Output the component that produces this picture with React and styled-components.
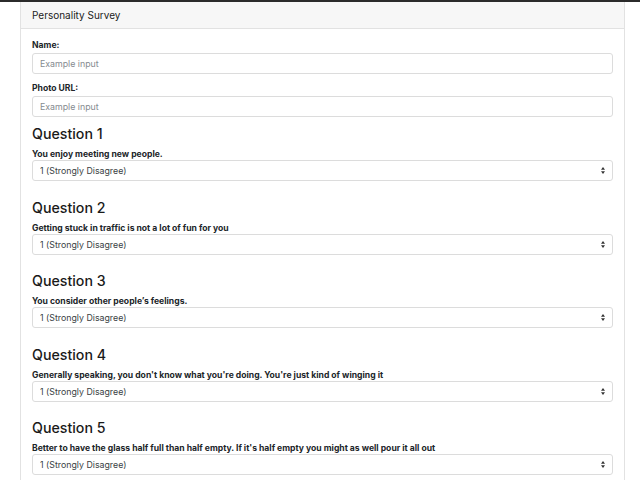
import React from "react";
import styled, { createGlobalStyle } from "styled-components";

const Global = createGlobalStyle`
  html, body { margin: 0; padding: 0; background: #fff; }
  body {
    font-family: Inter, "Liberation Sans", Arial, sans-serif;
    color: #212529;
    border-top: 2px solid #2b2b2b;
  }
  * { box-sizing: border-box; }
`;

const Page = styled.div`
  padding: 0 15px 0 20px;
`;

const Card = styled.section`
  border: 1px solid #e2e2e2;
  border-top: none;
  background: #fff;
`;

const CardHeader = styled.header`
  height: 27px;
  display: flex;
  align-items: center;
  padding: 0 11px;
  background: #f7f7f7;
  border-bottom: 1px solid #e2e2e2;
  font-size: 10px;
  color: #222;
`;

const CardBody = styled.div`
  padding: 10px 11px 0;
`;

const Group = styled.div`
  margin-bottom: ${(p) => p.$mb || 8}px;
`;

const Label = styled.label`
  display: block;
  font-size: 8.6px;
  font-weight: 700;
  line-height: 12px;
  margin-bottom: ${(p) => (p.$tight ? 0 : 2)}px;
  color: #212529;
`;

const Input = styled.input`
  display: block;
  width: 100%;
  height: 21px;
  padding: 0 7px;
  border: 1px solid #dcdcdc;
  border-radius: 3px;
  font-family: inherit;
  font-size: 8.8px;
  color: #495057;
  outline: none;
  &::placeholder { color: #868b90; }
`;

const Heading = styled.h4`
  margin: 0 0 6px;
  font-size: 14.2px;
  font-weight: 500;
  line-height: 17px;
  color: #1a1a1a;
`;

const SelectWrap = styled.div`
  position: relative;
`;

const Select = styled.select`
  display: block;
  width: 100%;
  height: 21px;
  padding: 0 20px 0 7px;
  border: 1px solid #dcdcdc;
  border-radius: 3px;
  background: #fff;
  font-family: inherit;
  font-size: 8.8px;
  color: #3a3f44;
  appearance: none;
  -webkit-appearance: none;
  outline: none;
`;

const Arrows = styled.svg`
  position: absolute;
  right: 8px;
  top: 7px;
  width: 4px;
  height: 7px;
  pointer-events: none;
`;

const questions = [
  "You enjoy meeting new people.",
  "Getting stuck in traffic is not a lot of fun for you",
  "You consider other people\u2019s feelings.",
  "Generally speaking, you don't know what you're doing. You're just kind of winging it",
  "Better to have the glass half full than half empty. If it's half empty you might as well pour it all out",
];

const options = [
  "1 (Strongly Disagree)",
  "2",
  "3",
  "4",
  "5 (Strongly Agree)",
];

export default function App() {
  return (
    <Page>
      <Global />
      <Card>
        <CardHeader>Personality Survey</CardHeader>
        <CardBody>
          <Group>
            <Label htmlFor="name">Name:</Label>
            <Input id="name" placeholder="Example input" />
          </Group>
          <Group>
            <Label htmlFor="photo">Photo URL:</Label>
            <Input id="photo" placeholder="Example input" />
          </Group>
          {questions.map((q, i) => (
            <Group key={i} $mb={17.5}>
              <Heading>Question {i + 1}</Heading>
              <Label htmlFor={`q${i}`} $tight>
                {q}
              </Label>
              <SelectWrap>
                <Select id={`q${i}`} defaultValue={options[0]}>
                  {options.map((o) => (
                    <option key={o}>{o}</option>
                  ))}
                </Select>
                <Arrows viewBox="0 0 4 7">
                  <path d="M2 0 L4 2.7 L0 2.7 Z" fill="#333" />
                  <path d="M2 7 L4 4.3 L0 4.3 Z" fill="#333" />
                </Arrows>
              </SelectWrap>
            </Group>
          ))}
        </CardBody>
      </Card>
    </Page>
  );
}
